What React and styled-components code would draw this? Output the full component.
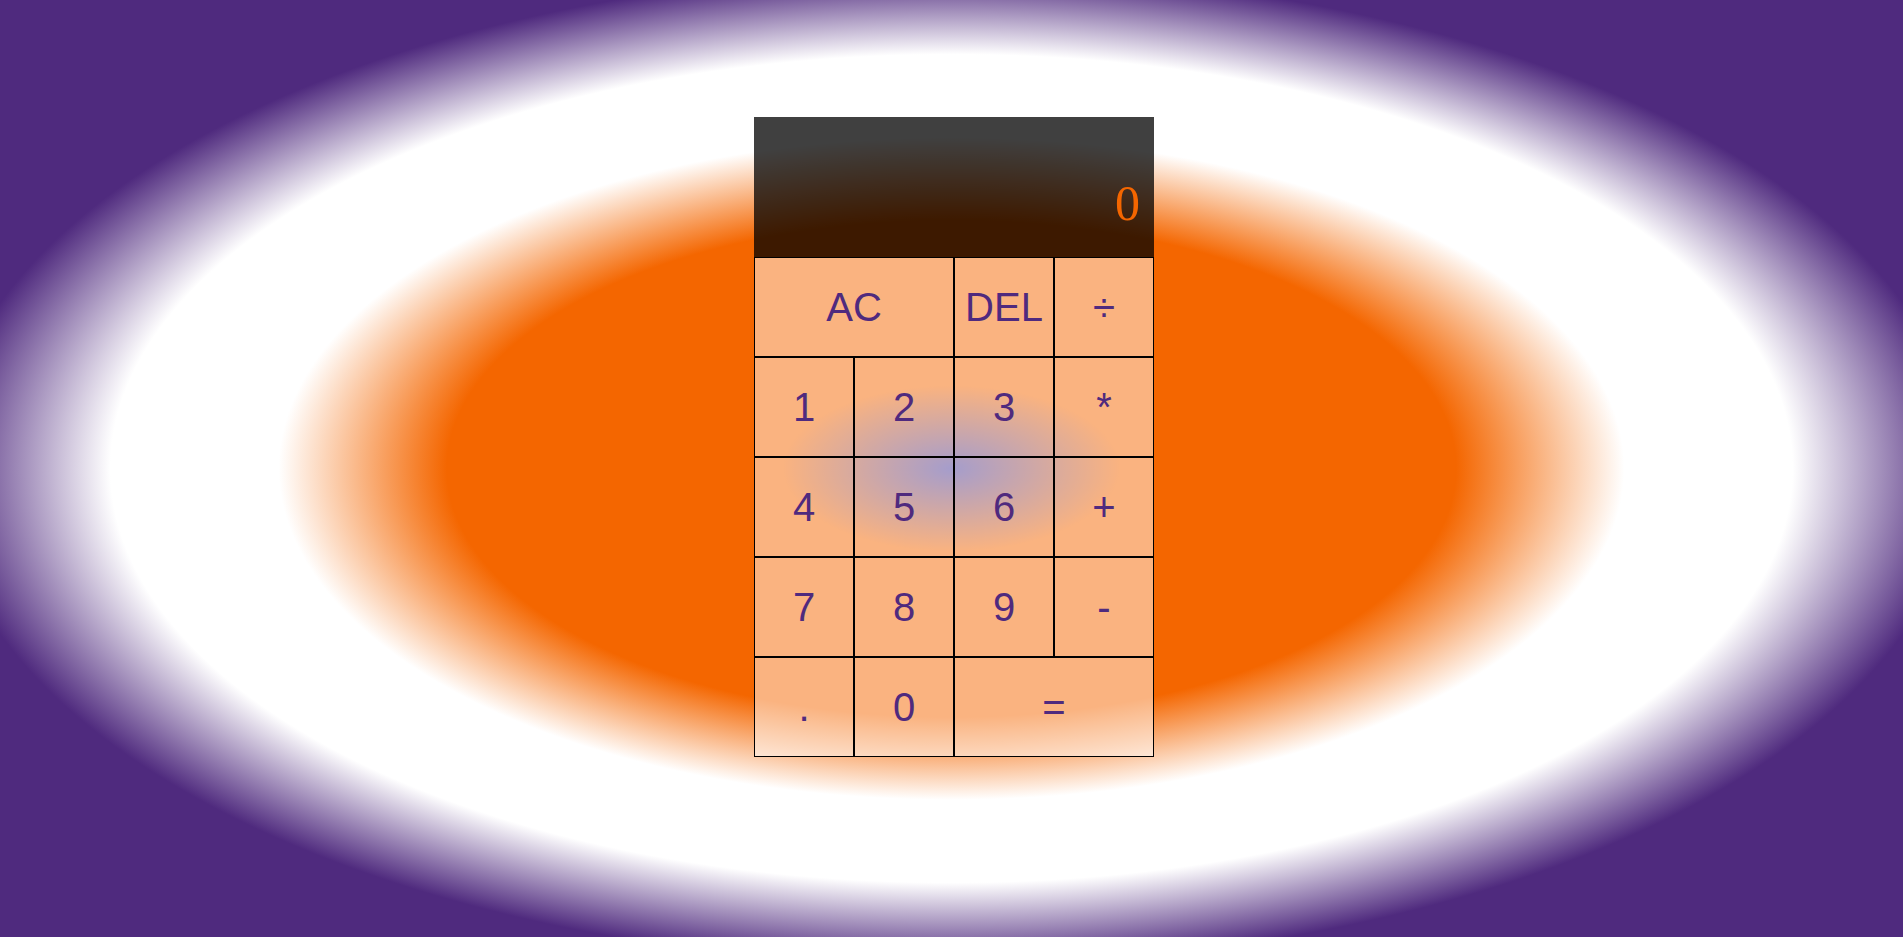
import React from "react";
import styled, { createGlobalStyle } from "styled-components";

const GlobalStyle = createGlobalStyle`
  *, *::before, *::after { box-sizing: border-box; }
  html, body { margin: 0; padding: 0; }
  body {
    min-height: 100vh;
    background: radial-gradient(
      #4a3a98 0%,
      #f46600 12.5%,
      #f46600 37.5%,
      #ffffff 50%,
      #ffffff 62.5%,
      #4f2a7e 75%,
      #4f2a7e 100%
    );
    background-attachment: fixed;
    font-family: "Liberation Sans", Arial, sans-serif;
  }
`;

const Page = styled.div`
  min-height: 100vh;
  display: flex;
  justify-content: center;
  align-items: flex-start;
  padding: 117px 0 0 5px;
`;

const Grid = styled.div`
  display: grid;
  grid-template-columns: repeat(4, 100px);
  grid-template-rows: 140px repeat(5, 100px);
`;

const Output = styled.div`
  grid-column: 1 / -1;
  background-color: rgba(0, 0, 0, 0.75);
  display: flex;
  flex-direction: column;
  align-items: flex-end;
  justify-content: space-around;
  padding: 10px 14px 10px 10px;
`;

const Previous = styled.div`
  color: rgba(255, 255, 255, 0.75);
  font-family: "Liberation Serif", "Times New Roman", serif;
  font-size: 24px;
`;

const Current = styled.div`
  color: #f46600;
  font-family: "Liberation Serif", "Times New Roman", serif;
  font-size: 50px;
`;

const Key = styled.button`
  grid-column: ${(p) => (p.$wide ? "span 2" : "auto")};
  border: 1px solid #000;
  margin: 0;
  padding: 0;
  outline: none;
  cursor: pointer;
  background-color: rgba(255, 255, 255, 0.5);
  color: #4f2a7e;
  font-family: "Liberation Sans", Arial, sans-serif;
  font-size: 40px;
  font-weight: normal;
`;

const keys = [
  { label: "AC", wide: true },
  { label: "DEL" },
  { label: "÷" },
  { label: "1" },
  { label: "2" },
  { label: "3" },
  { label: "*" },
  { label: "4" },
  { label: "5" },
  { label: "6" },
  { label: "+" },
  { label: "7" },
  { label: "8" },
  { label: "9" },
  { label: "-" },
  { label: "." },
  { label: "0" },
  { label: "=", wide: true },
];

export default function App() {
  return (
    <>
      <GlobalStyle />
      <Page>
        <Grid>
          <Output>
            <Previous />
            <Current>0</Current>
          </Output>
          {keys.map((k) => (
            <Key key={k.label} $wide={k.wide}>
              {k.label}
            </Key>
          ))}
        </Grid>
      </Page>
    </>
  );
}
